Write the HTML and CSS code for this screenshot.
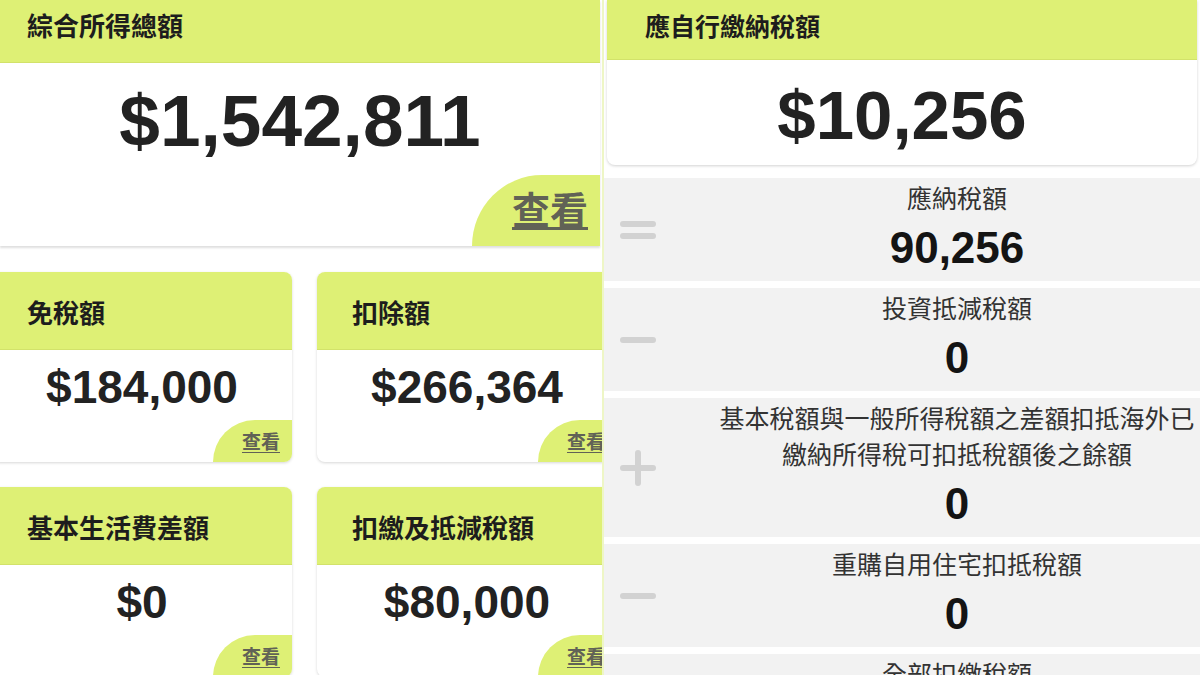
FILE: index.html
```html
<!DOCTYPE html>
<html lang="zh-Hant">
<head>
<meta charset="utf-8">
<title>稅額試算</title>
<link rel="stylesheet" href="styles.css">
</head>
<body>
<div class="screen">
  <section class="left">
    <div class="hero">
      <div class="hero-head">綜合所得總額</div>
      <div class="hero-body">
        <div class="hero-amount">$1,542,811</div>
        <div class="view view-lg"><span>查看</span></div>
      </div>
    </div>
    <div class="cards">
      <div class="card">
        <div class="card-head">免稅額</div>
        <div class="card-body">
          <div class="card-amount">$184,000</div>
          <div class="view view-sm"><span>查看</span></div>
        </div>
      </div>
      <div class="card">
        <div class="card-head">扣除額</div>
        <div class="card-body">
          <div class="card-amount">$266,364</div>
          <div class="view view-sm"><span>查看</span></div>
        </div>
      </div>
      <div class="card">
        <div class="card-head">基本生活費差額</div>
        <div class="card-body">
          <div class="card-amount">$0</div>
          <div class="view view-sm"><span>查看</span></div>
        </div>
      </div>
      <div class="card">
        <div class="card-head">扣繳及抵減稅額</div>
        <div class="card-body">
          <div class="card-amount">$80,000</div>
          <div class="view view-sm"><span>查看</span></div>
        </div>
      </div>
    </div>
  </section>

  <section class="right">
    <div class="due">
      <div class="due-head">應自行繳納稅額</div>
      <div class="due-body">$10,256</div>
    </div>
    <div class="rows">
      <div class="row">
        <div class="op"><svg width="36" height="20" viewBox="0 0 36 20"><rect x="0" y="1" width="36" height="6" rx="3" fill="#d2d2d2"/><rect x="0" y="13" width="36" height="6" rx="3" fill="#d2d2d2"/></svg></div>
        <div class="row-main">
          <div class="row-label">應納稅額</div>
          <div class="row-value">90,256</div>
        </div>
      </div>
      <div class="row">
        <div class="op"><svg width="36" height="6" viewBox="0 0 36 6"><rect x="0" y="0" width="36" height="6" rx="3" fill="#d2d2d2"/></svg></div>
        <div class="row-main">
          <div class="row-label">投資抵減稅額</div>
          <div class="row-value">0</div>
        </div>
      </div>
      <div class="row">
        <div class="op"><svg width="36" height="36" viewBox="0 0 36 36"><rect x="0" y="15" width="36" height="6" rx="3" fill="#d2d2d2"/><rect x="15" y="0" width="6" height="36" rx="3" fill="#d2d2d2"/></svg></div>
        <div class="row-main">
          <div class="row-label">基本稅額與一般所得稅額之差額扣抵海外已<br>繳納所得稅可扣抵稅額後之餘額</div>
          <div class="row-value">0</div>
        </div>
      </div>
      <div class="row">
        <div class="op"><svg width="36" height="6" viewBox="0 0 36 6"><rect x="0" y="0" width="36" height="6" rx="3" fill="#d2d2d2"/></svg></div>
        <div class="row-main">
          <div class="row-label">重購自用住宅扣抵稅額</div>
          <div class="row-value">0</div>
        </div>
      </div>
      <div class="row">
        <div class="op"></div>
        <div class="row-main">
          <div class="row-label">全部扣繳稅額</div>
          <div class="row-value">80,000</div>
        </div>
      </div>
    </div>
  </section>
</div>
</body>
</html>
```

FILE: styles.css
```css
* { box-sizing: border-box; }

html, body {
  margin: 0;
  padding: 0;
  background: #ffffff;
}

body {
  font-family: "Liberation Sans", "Noto Sans CJK TC", sans-serif;
  color: #222222;
}

.screen {
  width: 1200px;
  height: 675px;
  display: flex;
  overflow: hidden;
}

/* ---------- left panel ---------- */
.left {
  width: 602px;
  flex: none;
  background: #ffffff;
  overflow: hidden;
}

.hero {
  width: 600px;
  box-shadow: 0 2px 2px rgba(0, 0, 0, 0.13);
}

.hero-head {
  height: 63px;
  background: #def075;
  border-bottom: 1px solid #d2e26a;
  padding-left: 27px;
  font-family: "Noto Sans CJK TC", sans-serif;
  font-weight: 700;
  font-size: 26px;
  line-height: 50px;
  color: #1d1d1d;
}

.hero-body {
  height: 183px;
  background: #ffffff;
  display: flex;
  flex-direction: column;
}

.hero-amount {
  padding-top: 13px;
  text-align: center;
  font-weight: 700;
  font-size: 73px;
  line-height: 90px;
  color: #222222;
}

.view {
  margin-top: auto;
  align-self: flex-end;
  background: #def075;
  display: flex;
  align-items: center;
  justify-content: flex-end;
  font-family: "Noto Sans CJK TC", sans-serif;
  font-weight: 700;
  color: #616256;
}

.view span {
  text-decoration: underline;
  text-underline-offset: 3px;
}

.view-lg {
  width: 128px;
  height: 71px;
  border-top-left-radius: 70px 71px;
  padding-right: 12px;
  font-size: 38px;
  line-height: 44px;
  padding-bottom: 6px;
}

.view-sm {
  width: 79px;
  height: 42px;
  border-top-left-radius: 42px 42px;
  padding-right: 12px;
  font-size: 19px;
  line-height: 24px;
}

.cards {
  margin: 26px 0 0 -8px;
  display: grid;
  grid-template-columns: 300px 300px;
  column-gap: 25px;
  row-gap: 25px;
}

.card {
  height: 190px;
  border-radius: 8px;
  overflow: hidden;
  background: #ffffff;
  box-shadow: 0 1px 3px rgba(0, 0, 0, 0.16);
  display: flex;
  flex-direction: column;
}

.card-head {
  height: 78px;
  flex: none;
  background: #def075;
  border-bottom: 1px solid #d2e26a;
  padding-left: 35px;
  font-family: "Noto Sans CJK TC", sans-serif;
  font-weight: 700;
  font-size: 26px;
  line-height: 80px;
  color: #1d1d1d;
}

.card-body {
  flex: 1;
  display: flex;
  flex-direction: column;
}

.card-amount {
  padding-top: 9px;
  text-align: center;
  font-weight: 700;
  font-size: 46px;
  line-height: 56px;
  color: #222222;
}

/* ---------- right panel ---------- */
.right {
  flex: 1;
  background: #ffffff;
  overflow: hidden;
  border-left: 2px solid #eef6c6;
}

.due {
  margin: 0 3px 0 3px;
  border-radius: 0 0 8px 8px;
  overflow: hidden;
  box-shadow: 0 1px 3px rgba(0, 0, 0, 0.18);
  background: #ffffff;
}

.due-head {
  height: 60px;
  background: #def075;
  border-bottom: 1px solid #d2e26a;
  padding-left: 38px;
  font-family: "Noto Sans CJK TC", sans-serif;
  font-weight: 700;
  font-size: 25px;
  line-height: 50px;
  color: #1d1d1d;
}

.due-body {
  height: 105px;
  padding-top: 16px;
  text-align: center;
  font-weight: 700;
  font-size: 69px;
  line-height: 80px;
  color: #222222;
}

.rows {
  margin-top: 13px;
  display: flex;
  flex-direction: column;
  gap: 7px;
}

.row {
  background: #f2f2f2;
  display: grid;
  grid-template-columns: 110px 1fr;
  align-items: center;
}

.op {
  padding-left: 16px;
  display: flex;
  align-items: center;
}

.op svg { display: block; }

.row-main {
  padding: 1px 0 8px;
  text-align: center;
}

.row-label {
  font-family: "Noto Sans CJK TC", sans-serif;
  font-weight: 400;
  font-size: 25px;
  line-height: 36px;
  color: #333333;
}

.row-value {
  margin-top: 8px;
  font-weight: 700;
  font-size: 44px;
  line-height: 50px;
  color: #141414;
}
```
